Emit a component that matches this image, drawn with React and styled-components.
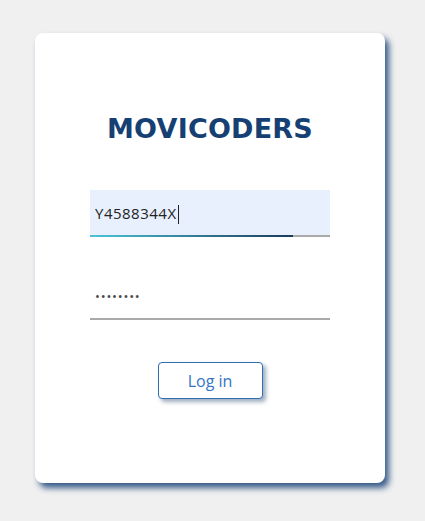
import React, { useState } from 'react'
import styled, { createGlobalStyle } from 'styled-components'

const GlobalStyle = createGlobalStyle`
  body {
    margin: 0;
    background-color: #f0f0f0;
    font-family: "Open Sans", "Liberation Sans", sans-serif;
  }
`

export default function App() {
  const [dni, setDni] = useState('Y4588344X')
  const [password, setPassword] = useState('12345678')

  return (
    <>
      <GlobalStyle />
      <Page>
        <LoginCard>
          <Title>MOVICODERS</Title>
          <Form onSubmit={(e) => e.preventDefault()}>
            <Field>
              <Input
                type="text"
                value={dni}
                $autofill
                onChange={(e) => setDni(e.target.value)}
              />
              <Caret />
              <FocusLine />
            </Field>
            <Field>
              <Input
                type="password"
                value={password}
                onChange={(e) => setPassword(e.target.value)}
              />
            </Field>
            <Button type="submit">Log in</Button>
          </Form>
        </LoginCard>
      </Page>
    </>
  )
}

const Page = styled.div`
  padding: 33px 0 0 35px;
  min-height: 100vh;
  box-sizing: border-box;
`

const LoginCard = styled.div`
  width: 350px;
  height: 450px;
  box-sizing: border-box;
  background-color: #ffffff;
  border-radius: 8px;
  box-shadow: 4px 5px 6px rgba(35, 75, 125, 0.9);
  display: flex;
  flex-direction: column;
  align-items: center;
  padding-top: 76px;
`

const Title = styled.h1`
  margin: 0;
  font-family: "DejaVu Sans", sans-serif;
  font-weight: 700;
  font-size: 27px;
  line-height: 40px;
  color: #163f73;
  letter-spacing: 0.2px;
`

const Form = styled.form`
  display: flex;
  flex-direction: column;
  align-items: center;
  margin-top: 41px;
  gap: 36px;
`

const Field = styled.div`
  position: relative;
  width: 240px;
`

const Input = styled.input`
  width: 100%;
  height: 47px;
  box-sizing: border-box;
  border: none;
  border-bottom: 2px solid #a9a9a9;
  outline: none;
  padding: 0 5px;
  font-family: "Open Sans", sans-serif;
  font-size: 15px;
  letter-spacing: 0.5px;
  color: #222;
  background-color: ${(p) => (p.$autofill ? '#e8f0fe' : 'transparent')};
  caret-color: transparent;

  &[type='password'] {
    font-size: 13px;
    color: #4a4a4a;
    letter-spacing: 0.8px;
  }
`

const Caret = styled.span`
  position: absolute;
  left: 88px;
  top: 15px;
  width: 1px;
  height: 19px;
  background: #222;
`

const FocusLine = styled.span`
  position: absolute;
  left: 0;
  bottom: 0;
  width: 203px;
  height: 2px;
  background: linear-gradient(to right, #4cc3d6, #1b3a5a);
`

const Button = styled.button`
  margin-top: 6px;
  width: 105px;
  height: 37px;
  background-color: #ffffff;
  border: 1px solid #2f6db5;
  border-radius: 4px;
  box-shadow: 3px 3px 4px rgba(40, 70, 110, 0.45);
  color: #3574c4;
  font-family: "Open Sans", sans-serif;
  font-size: 16px;
  cursor: pointer;
`
